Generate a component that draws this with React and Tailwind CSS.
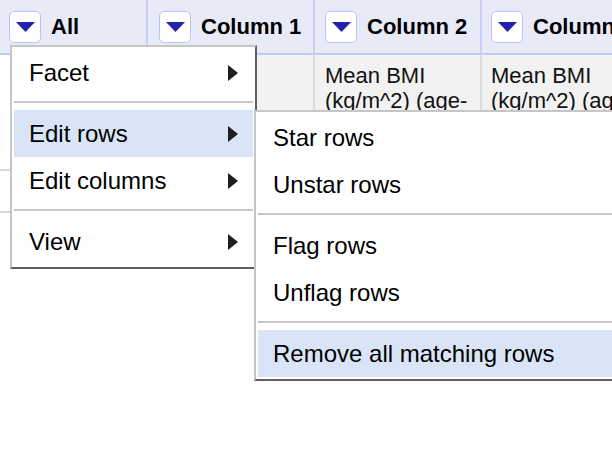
const font = "font-['Liberation_Sans',Arial,sans-serif]";

function DropButton() {
  return (
    <div className="w-[32px] h-[32px] shrink-0 rounded-[5px] border-[1.5px] border-[#b9c5f7] bg-white flex items-center justify-center">
      <svg width="19" height="10" viewBox="0 0 19 10">
        <polygon points="0,0 19,0 9.5,10" fill="#2222aa" />
      </svg>
    </div>
  );
}

function HeaderCell({ label, className }) {
  return (
    <div className={`h-full flex items-center gap-[10px] border-r-2 border-[#c6cff5] ${className}`}>
      <DropButton />
      <span className="text-[22px] font-bold text-black whitespace-nowrap">{label}</span>
    </div>
  );
}

function Arrow() {
  return (
    <svg width="10" height="16" viewBox="0 0 10 16">
      <polygon points="0,0 10,8 0,16" fill="#1e1e1e" />
    </svg>
  );
}

function Item({ label, sub, active }) {
  return (
    <div
      className={`h-[47px] flex items-center justify-between pl-[15px] pr-[15px] text-[24px] text-black whitespace-nowrap ${
        active ? 'bg-[#d9e5f6]' : ''
      }`}
    >
      <span>{label}</span>
      {sub && <Arrow />}
    </div>
  );
}

function Sep() {
  return <div className="mt-[5px] mb-[7px] h-[2px] bg-[#c9c9c9]" />;
}

export default function App() {
  return (
    <div className={`relative w-[612px] h-[452px] overflow-hidden bg-white ${font}`}>
      <div className="flex h-full">
        <div className="w-[2px] bg-[#c6cdf7]" />
        <div className="flex-1 flex flex-col">
          <div className="flex h-[55px] bg-[#e8eaf8] border-b-2 border-[#bfcaf7]">
            <HeaderCell label="All" className="w-[148px] pl-[9px]" />
            <HeaderCell label="Column 1" className="w-[167px] pl-[11px]" />
            <HeaderCell label="Column 2" className="w-[167px] pl-[10px]" />
            <HeaderCell label="Column 3" className="flex-1 pl-[9px] border-r-0" />
          </div>
          <div className="flex h-[116px] border-b-2 border-[#d8d8d8]">
            <div className="w-[148px] bg-white border-r-2 border-[#dcdcdc]" />
            <div className="w-[167px] bg-[#f2f2f2] border-r-2 border-[#dcdcdc]" />
            <div className="w-[167px] bg-[#f2f2f2] border-r-2 border-[#dcdcdc] pl-[10px] pt-[8px] text-[22px] leading-[25px] text-[#111]">
              Mean BMI (kg/m^2) (age-standardized estimate)
            </div>
            <div className="flex-1 bg-[#f2f2f2] pl-[9px] pt-[8px] text-[22px] leading-[25px] text-[#111] whitespace-nowrap">
              <div>Mean BMI</div>
              <div>(kg/m^2) (age-</div>
            </div>
          </div>
          <div className="flex h-[42px] border-b-2 border-[#d8d8d8]">
            <div className="w-[148px] bg-white" />
          </div>
        </div>
      </div>

      <div className="absolute left-[10px] top-[45px] w-[247px] bg-white border-2 border-[#c6c6c6] border-r-[#5f5f5f] border-b-[#5f5f5f] p-[2px] z-10">
        <Item label="Facet" sub />
        <Sep />
        <Item label="Edit rows" sub active />
        <Item label="Edit columns" sub />
        <Sep />
        <Item label="View" sub />
      </div>

      <div className="absolute left-[254px] top-[110px] w-[400px] bg-white border-2 border-[#c6c6c6] border-r-[#5f5f5f] border-b-[#5f5f5f] p-[2px] z-20">
        <Item label="Star rows" />
        <Item label="Unstar rows" />
        <Sep />
        <Item label="Flag rows" />
        <Item label="Unflag rows" />
        <Sep />
        <Item label="Remove all matching rows" active />
      </div>
    </div>
  );
}
